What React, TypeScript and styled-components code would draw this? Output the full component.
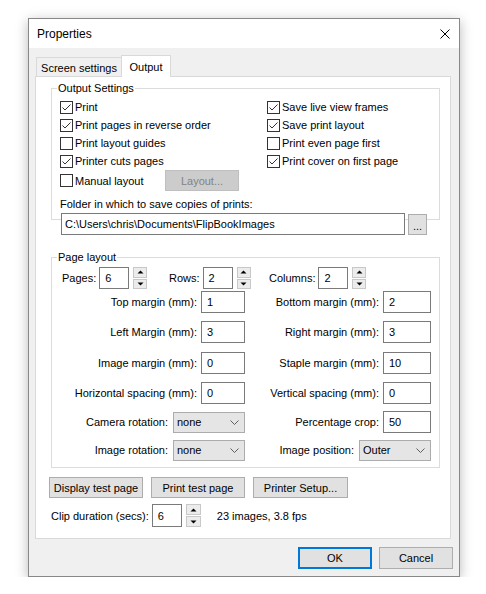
import styled, { createGlobalStyle } from "styled-components";

const GlobalStyle = createGlobalStyle`
  html, body {
    margin: 0;
    padding: 0;
    background: #ffffff;
  }
  body {
    font-family: "Liberation Sans", Arial, sans-serif;
    font-size: 11px;
    color: #000000;
  }
`;

const Window = styled.div`
  box-sizing: border-box;
  width: 432px;
  height: 559px;
  margin: 18px 0 0 28px;
  border: 1px solid #888888;
  background: #f0f0f0;
  box-shadow: 0 3px 12px rgba(0, 0, 0, 0.28);
  display: flex;
  flex-direction: column;
`;

const TitleBar = styled.div`
  height: 29px;
  background: #ffffff;
  display: flex;
  align-items: center;
  justify-content: space-between;
  padding: 0 9px 0 8px;
  font-size: 12px;
`;

const Body = styled.div`
  padding: 7px 8px 0 6px;
`;

const TabStrip = styled.div`
  display: flex;
  align-items: flex-end;
  height: 21px;
  padding-left: 1px;
`;

const Tab = styled.div<{ $active?: boolean }>`
  box-sizing: border-box;
  display: flex;
  align-items: center;
  justify-content: center;
  border: 1px solid #d9d9d9;
  border-bottom: none;
  width: ${(p) => (p.$active ? "50px" : "86px")};
  height: ${(p) => (p.$active ? "22px" : "19px")};
  background: ${(p) => (p.$active ? "#ffffff" : "#f0f0f0")};
  margin-left: ${(p) => (p.$active ? "-1px" : "0")};
  margin-bottom: ${(p) => (p.$active ? "-1px" : "0")};
  padding-top: ${(p) => (p.$active ? "0" : "2px")};
  position: relative;
  z-index: ${(p) => (p.$active ? 1 : 0)};
`;

const Panel = styled.div`
  box-sizing: border-box;
  width: 416px;
  height: 463px;
  border: 1px solid #d9d9d9;
  background: #ffffff;
`;

const Group = styled.fieldset<{ $top: number; $bottom?: number }>`
  margin: ${(p) => p.$top}px 10px 0 15px;
  padding: 0 8px ${(p) => p.$bottom ?? 0}px 8px;
  border: 1px solid #dcdcdc;
  min-width: 0;
`;

const Legend = styled.legend`
  padding: 0 1px;
  margin-left: -3px;
  line-height: 16px;
`;

const CheckGrid = styled.div`
  display: grid;
  grid-template-columns: 207px 1fr;
  grid-template-rows: repeat(4, 18px) 21px;
  margin-top: 2px;
`;

const CheckLabel = styled.div`
  display: flex;
  align-items: center;
  gap: 2px;
`;

const Box = styled.div`
  box-sizing: border-box;
  width: 13px;
  height: 13px;
  border: 1px solid #333333;
  background: #ffffff;
  display: flex;
`;

const ManualRow = styled.div`
  display: grid;
  grid-template-columns: 105px auto;
  align-items: center;
`;

const Button = styled.div<{ $w: number; $h?: number; $disabled?: boolean; $default?: boolean }>`
  box-sizing: border-box;
  width: ${(p) => p.$w}px;
  height: ${(p) => p.$h ?? 21}px;
  display: flex;
  align-items: center;
  justify-content: center;
  background: ${(p) => (p.$disabled ? "#cccccc" : "#e1e1e1")};
  border: ${(p) =>
    p.$default ? "2px solid #0078d7" : p.$disabled ? "1px solid #bfbfbf" : "1px solid #adadad"};
  color: ${(p) => (p.$disabled ? "#838383" : "#000000")};
  white-space: nowrap;
`;

const FolderLabel = styled.div`
  margin-top: 5px;
  line-height: 16px;
`;

const FolderRow = styled.div`
  display: flex;
  gap: 3px;
  height: 22px;
  margin: 1px 0 -16px 1px;
`;

const TextBox = styled.div<{ $w: number; $h?: number; $pad?: number }>`
  box-sizing: border-box;
  width: ${(p) => p.$w}px;
  height: ${(p) => p.$h ?? 22}px;
  border: 1px solid #7a7a7a;
  background: #ffffff;
  padding-left: ${(p) => p.$pad ?? 5}px;
  display: flex;
  align-items: center;
  white-space: nowrap;
  overflow: hidden;
`;

const BrowseButton = styled.div`
  box-sizing: border-box;
  width: 19px;
  height: 21px;
  align-self: flex-end;
  border: 1px solid #adadad;
  background: #e1e1e1;
  display: flex;
  align-items: center;
  justify-content: center;
  padding-top: 3px;
`;

const SpinRow = styled.div`
  display: grid;
  grid-template-columns: 107px 100px 1fr;
  height: 22px;
  margin-top: 2px;
  padding-left: 2px;
`;

const Field = styled.div<{ $gap?: number }>`
  display: flex;
  align-items: center;
  gap: ${(p) => p.$gap ?? 3}px;
`;

const Spin = styled.div<{ $w: number; $h: number }>`
  display: flex;
  flex-direction: column;
  gap: 1px;
  width: ${(p) => p.$w}px;
  height: ${(p) => p.$h}px;
  margin-left: 1px;
`;

const SpinHalf = styled.div`
  flex: 1;
  box-sizing: border-box;
  border: 1px solid #c8c8c8;
  background: #ececec;
  display: flex;
  align-items: center;
  justify-content: center;
`;

const FormGrid = styled.div`
  display: grid;
  grid-template-columns: 185px 1fr;
  grid-template-rows: 30px 31px 30px 29px 28px 22px;
  margin-top: 2px;
`;

const FormCell = styled.div<{ $gap?: number }>`
  display: flex;
  justify-content: flex-end;
  align-items: center;
  gap: ${(p) => p.$gap ?? 4}px;
  height: 22px;
`;

const Combo = styled.div`
  box-sizing: border-box;
  width: 72px;
  height: 21px;
  border: 1px solid #acacac;
  background: #e5e5e5;
  display: flex;
  align-items: center;
  justify-content: space-between;
  padding: 0 5px 0 3px;
`;

const ButtonRow = styled.div`
  display: flex;
  gap: 8px;
  margin: 9px 0 0 13px;
`;

const ClipRow = styled.div`
  display: flex;
  align-items: center;
  height: 23px;
  margin: 6px 0 0 15px;
`;

const ClipInfo = styled.span`
  margin-left: 16px;
`;

const Footer = styled.div`
  display: flex;
  justify-content: flex-end;
  gap: 7px;
  margin: 8px -2px 0 0;
`;

function Check({ label, checked }: { label: string; checked?: boolean }) {
  return (
    <CheckLabel>
      <Box>
        {checked && (
          <svg width="11" height="11" viewBox="0 0 11 11">
            <polyline points="1.5,5.5 4,8 9.5,2.5" fill="none" stroke="#333" strokeWidth="1" />
          </svg>
        )}
      </Box>
      <span>{label}</span>
    </CheckLabel>
  );
}

function SpinButtons({ w, h }: { w: number; h: number }) {
  return (
    <Spin $w={w} $h={h}>
      <SpinHalf>
        <svg width="7" height="4" viewBox="0 0 7 4">
          <polygon points="0.5,3.5 3.5,0.5 6.5,3.5" fill="#000" />
        </svg>
      </SpinHalf>
      <SpinHalf>
        <svg width="7" height="4" viewBox="0 0 7 4">
          <polygon points="0.5,0.5 3.5,3.5 6.5,0.5" fill="#000" />
        </svg>
      </SpinHalf>
    </Spin>
  );
}

function Chevron() {
  return (
    <svg width="9" height="5" viewBox="0 0 9 5">
      <polyline points="0.5,0.5 4.5,4.5 8.5,0.5" fill="none" stroke="#5f5f5f" strokeWidth="1" />
    </svg>
  );
}

function App() {
  return (
    <>
      <GlobalStyle />
      <Window>
        <TitleBar>
          <span>Properties</span>
          <svg width="10" height="10" viewBox="0 0 10 10">
            <path d="M0.5 0.5 L9.5 9.5 M9.5 0.5 L0.5 9.5" stroke="#000" strokeWidth="1" />
          </svg>
        </TitleBar>
        <Body>
          <TabStrip>
            <Tab>Screen settings</Tab>
            <Tab $active>Output</Tab>
          </TabStrip>
          <Panel>
            <Group $top={3}>
              <Legend>Output Settings</Legend>
              <CheckGrid>
                <Check label="Print" checked />
                <Check label="Save live view frames" checked />
                <Check label="Print pages in reverse order" checked />
                <Check label="Save print layout" checked />
                <Check label="Print layout guides" />
                <Check label="Print even page first" />
                <Check label="Printer cuts pages" checked />
                <Check label="Print cover on first page" checked />
                <ManualRow>
                  <Check label="Manual layout" />
                  <Button $w={74} $disabled>
                    Layout...
                  </Button>
                </ManualRow>
              </CheckGrid>
              <FolderLabel>Folder in which to save copies of prints:</FolderLabel>
              <FolderRow>
                <TextBox $w={344} $pad={3}>
                  C:\Users\chris\Documents\FlipBookImages
                </TextBox>
                <BrowseButton>...</BrowseButton>
              </FolderRow>
            </Group>

            <Group $top={29} $bottom={6}>
              <Legend>Page layout</Legend>
              <SpinRow>
                <Field>
                  <span>Pages:</span>
                  <TextBox $w={30}>6</TextBox>
                  <SpinButtons w={14} h={22} />
                </Field>
                <Field>
                  <span>Rows:</span>
                  <TextBox $w={30}>2</TextBox>
                  <SpinButtons w={14} h={22} />
                </Field>
                <Field>
                  <span>Columns:</span>
                  <TextBox $w={30}>2</TextBox>
                  <SpinButtons w={14} h={22} />
                </Field>
              </SpinRow>
              <FormGrid>
                <FormCell>
                  <span>Top margin (mm):</span>
                  <TextBox $w={44}>1</TextBox>
                </FormCell>
                <FormCell>
                  <span>Bottom margin (mm):</span>
                  <TextBox $w={48}>2</TextBox>
                </FormCell>
                <FormCell>
                  <span>Left Margin (mm):</span>
                  <TextBox $w={44}>3</TextBox>
                </FormCell>
                <FormCell>
                  <span>Right margin (mm):</span>
                  <TextBox $w={48}>3</TextBox>
                </FormCell>
                <FormCell>
                  <span>Image margin (mm):</span>
                  <TextBox $w={44}>0</TextBox>
                </FormCell>
                <FormCell>
                  <span>Staple margin (mm):</span>
                  <TextBox $w={48}>10</TextBox>
                </FormCell>
                <FormCell>
                  <span>Horizontal spacing (mm):</span>
                  <TextBox $w={44}>0</TextBox>
                </FormCell>
                <FormCell>
                  <span>Vertical spacing (mm):</span>
                  <TextBox $w={48}>0</TextBox>
                </FormCell>
                <FormCell $gap={5}>
                  <span>Camera rotation:</span>
                  <Combo>
                    none
                    <Chevron />
                  </Combo>
                </FormCell>
                <FormCell>
                  <span>Percentage crop:</span>
                  <TextBox $w={48}>50</TextBox>
                </FormCell>
                <FormCell $gap={5}>
                  <span>Image rotation:</span>
                  <Combo>
                    none
                    <Chevron />
                  </Combo>
                </FormCell>
                <FormCell $gap={5}>
                  <span>Image position:</span>
                  <Combo>
                    Outer
                    <Chevron />
                  </Combo>
                </FormCell>
              </FormGrid>
            </Group>

            <ButtonRow>
              <Button $w={94}>Display test page</Button>
              <Button $w={94}>Print test page</Button>
              <Button $w={95}>Printer Setup...</Button>
            </ButtonRow>
            <ClipRow>
              <Field>
                <span>Clip duration (secs):</span>
                <TextBox $w={30} $h={23}>6</TextBox>
                <SpinButtons w={15} h={23} />
              </Field>
              <ClipInfo>23 images, 3.8 fps</ClipInfo>
            </ClipRow>
          </Panel>
          <Footer>
            <Button $w={74} $h={22} $default>
              OK
            </Button>
            <Button $w={74} $h={22}>
              Cancel
            </Button>
          </Footer>
        </Body>
      </Window>
    </>
  );
}

export default App;
